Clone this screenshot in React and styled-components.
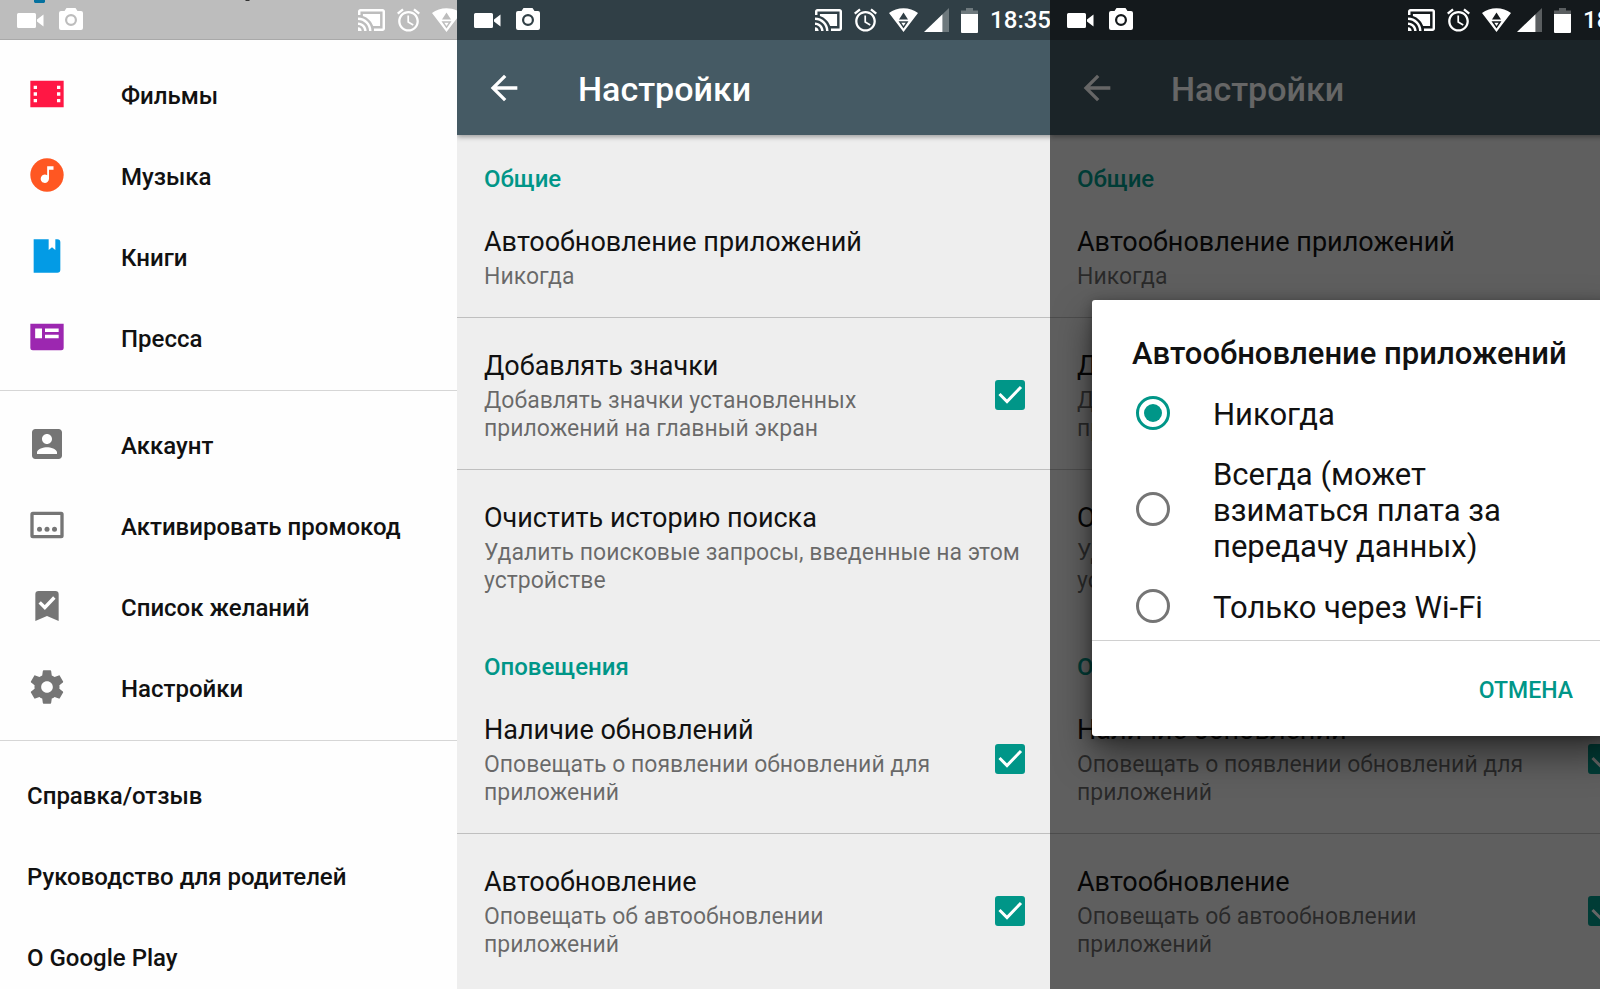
import React, { useState } from "react";
import styled, { createGlobalStyle, css } from "styled-components";

const teal = "#009688";

const GlobalStyle = createGlobalStyle`
  *, *::before, *::after { box-sizing: border-box; }
  body {
    margin: 0;
    font-family: Roboto, "Noto Sans", sans-serif;
    font-size: 24px;
    line-height: 28px;
    color: #111;
  }
  button, input { font: inherit; color: inherit; margin: 0; }
  h1, h2, h3, p { margin: 0; font: inherit; }
  svg { display: block; flex: none; }
`;

const Board = styled.main`
  display: grid;
  grid-template-columns: 457fr 593fr 550fr;
  height: 100vh;
  overflow: hidden;
`;

const Panel = styled.section`
  overflow: hidden;
  background: ${(p) => (p.$drawer ? "#fefefe" : "#eee")};
`;

const Screen = styled.div`
  position: relative;
  display: flex;
  flex-direction: column;
  min-width: 608px;
  min-height: 100%;
`;

const barLook = {
  drawer: css`background: #bdbdbd; box-shadow: inset 0 -1px #a9a9a9;`,
  normal: css`background: #303f46;`,
  dimmed: css`background: #14191c;`,
};

const StatusRow = styled.header`
  position: relative;
  z-index: 2;
  display: flex;
  justify-content: space-between;
  align-items: center;
  height: 40px;
  padding: 0 14px 0 17px;
  color: #fff;
  ${(p) => barLook[p.$look]}
`;

const StatusGroup = styled.div`
  display: flex;
  align-items: center;
  gap: ${(p) => p.$gap}px;
`;

const Clock = styled.time`
  font-weight: 500;
`;

const Behind = styled.svg`
  position: absolute;
  top: 0;
  left: 34px;
`;

const AppBar = styled.div`
  position: relative;
  display: flex;
  align-items: center;
  gap: 54px;
  height: 95px;
  padding: 0 27px;
  background: #455a64;
  color: #fff;
  box-shadow: 0 2px 5px rgba(0, 0, 0, 0.35);
`;

const BackButton = styled.button`
  display: flex;
  padding: 0;
  border: 0;
  background: none;
`;

const BarTitle = styled.h1`
  padding-top: 3px;
  font-size: 34px;
  line-height: 40px;
  font-weight: 500;
`;

const SectionTitle = styled.h2`
  padding: 30px 27px 1px;
  font-weight: 500;
  color: ${teal};
`;

const rowBox = css`
  display: flex;
  align-items: center;
  justify-content: space-between;
  gap: 36px;
  width: 100%;
  padding: 32px 27px ${(p) => (p.$last ? 28 : 26)}px;
  border: 0;
  border-bottom: ${(p) => (p.$last ? "0" : "1px solid #bfbfbf")};
  background: none;
  text-align: left;
`;

const ButtonRow = styled.button`${rowBox}`;
const LabelRow = styled.label`${rowBox}`;

const RowText = styled.span`
  display: flex;
  flex-direction: column;
  gap: 5px;
`;

const RowTitle = styled.span`
  font-size: 27px;
  line-height: 32px;
`;

const RowSummary = styled.span`
  font-size: 23px;
  color: rgba(0, 0, 0, 0.56);
`;

const CheckWrap = styled.span`
  display: grid;
  flex: none;
  margin: 0 13px 4px 0;

  & > * { grid-area: 1 / 1; }
  & > svg { pointer-events: none; }
`;

const CheckInput = styled.input`
  appearance: none;
  width: 30px;
  height: 30px;
  border: 3px solid #757575;
  border-radius: 3px;

  &:checked { border-color: ${teal}; background: ${teal}; }
`;

const DrawerGroup = styled.nav`
  display: flex;
  flex-direction: column;
  padding: 13px 0 12px;
  border-bottom: ${(p) => (p.$last ? "0" : "1px solid #d6d6d6")};
`;

const DrawerLink = styled.a`
  display: flex;
  align-items: center;
  gap: 54px;
  height: 81px;
  padding: 2px 27px 0;
  font-weight: 500;
  color: #111;
  text-decoration: none;

  & > svg { margin-bottom: 4px; }
`;

const DrawerTop = styled.div`
  height: 1px;
`;

const Scrim = styled.div`
  position: absolute;
  inset: 0;
  z-index: 1;
  padding: 300px 42px 0;
  background: rgba(0, 0, 0, 0.6);
`;

const Dialog = styled.div`
  border-radius: 3px;
  background: #fff;
  box-shadow: 0 18px 36px rgba(0, 0, 0, 0.5), 0 2px 12px rgba(0, 0, 0, 0.3);
`;

const DialogTitle = styled.h2`
  padding: 36px 40px 1px;
  font-size: 31px;
  line-height: 36px;
  font-weight: 500;
`;

const Choices = styled.div`
  height: 268px;
  overflow: hidden;
  border-bottom: 1px solid #d0d0d0;
`;

const Choice = styled.label`
  display: flex;
  align-items: center;
  gap: 43px;
  min-height: 81px;
  padding: 3px 54px 1px 44px;
  font-size: 31px;
  line-height: 36px;
`;

const RadioInput = styled.input`
  appearance: none;
  display: grid;
  place-items: center;
  flex: none;
  width: 34px;
  height: 34px;
  border: 3px solid #757575;
  border-radius: 50%;

  ${Choice} & { margin-bottom: 4px; }

  &:checked { border-color: ${teal}; }
  &:checked::before {
    content: "";
    width: 18px;
    height: 18px;
    border-radius: 50%;
    background: ${teal};
  }
`;

const DialogActions = styled.div`
  display: flex;
  justify-content: flex-end;
  padding: 25px 27px 20px;
`;

const TextButton = styled.button`
  height: 50px;
  padding: 0 16px;
  border: 0;
  background: none;
  font-size: 23px;
  font-weight: 500;
  color: ${teal};
`;

const Icon = ({ children, color = "#757575" }) => (
  <svg width="40" height="40" viewBox="0 0 24 24" fill={color} aria-hidden="true">{children}</svg>
);

const icons = {
  movies: (
    <Icon color="#ff1744">
      <path fillRule="evenodd" d="M2 4h20v16H2zM4 7v2h2V7zM4 11v2h2v-2zM4 15v2h2v-2zM18 7v2h2V7zM18 11v2h2v-2zM18 15v2h2v-2z" />
    </Icon>
  ),
  music: (
    <Icon color="#ff5722">
      <circle cx="12" cy="12" r="10" />
      <path fill="#fff" d="M12.1 6.8h3.8v2.1h-2.7v5.4a2.5 2.5 0 1 1-1.1-2.1z" />
    </Icon>
  ),
  books: (
    <Icon color="#039be5">
      <path d="M4 2h9v6.4l2-1.7 2 1.7V2h1.2A1.8 1.8 0 0 1 20 3.8V20.2A1.8 1.8 0 0 1 18.2 22H4z" />
    </Icon>
  ),
  press: (
    <Icon color="#9c27b0">
      <path d="M2 4h20v14.5A1.5 1.5 0 0 1 20.5 20h-17A1.5 1.5 0 0 1 2 18.5z" />
      <path fill="#fff" d="M4.9 6.9h4.1v5.9H4.9zM10.8 6.9H19v2.1h-8.2zM10.8 10.7H19v2.1h-8.2z" />
    </Icon>
  ),
  account: (
    <Icon>
      <path d="M3 5v14c0 1.1.89 2 2 2h14c1.1 0 2-.9 2-2V5c0-1.1-.9-2-2-2H5c-1.11 0-2 .9-2 2zm12 4c0 1.66-1.34 3-3 3s-3-1.34-3-3 1.34-3 3-3 3 1.34 3 3zm-9 8c0-2 4-3.1 6-3.1s6 1.1 6 3.1v1H6v-1z" />
    </Icon>
  ),
  promo: (
    <Icon>
      <path fillRule="evenodd" d="M3.5 4h17A1.5 1.5 0 0 1 22 5.5v13a1.5 1.5 0 0 1-1.5 1.5h-17A1.5 1.5 0 0 1 2 18.5v-13A1.5 1.5 0 0 1 3.5 4zM4 6v12h16V6z" />
      <circle cx="7.5" cy="14.5" r="1.5" />
      <circle cx="12" cy="14.5" r="1.5" />
      <circle cx="16.5" cy="14.5" r="1.5" />
    </Icon>
  ),
  wishlist: (
    <Icon>
      <path d="M7 3h10a2 2 0 0 1 2 2v16l-7-3-7 3V5a2 2 0 0 1 2-2z" />
      <path d="M7.6 9.8l3.1 3.1 5.7-6" fill="none" stroke="#fff" strokeWidth="2" />
    </Icon>
  ),
  settings: (
    <Icon>
      <path d="M19.43 12.98c.04-.32.07-.64.07-.98s-.03-.66-.07-.98l2.11-1.65c.19-.15.24-.42.12-.64l-2-3.46c-.12-.22-.39-.3-.61-.22l-2.49 1c-.52-.4-1.08-.73-1.69-.98l-.38-2.65C14.46 2.18 14.25 2 14 2h-4c-.25 0-.46.18-.49.42l-.38 2.65c-.61.25-1.17.59-1.69.98l-2.49-1c-.23-.09-.49 0-.61.22l-2 3.46c-.13.22-.07.49.12.64l2.11 1.65c-.04.32-.07.65-.07.98s.03.66.07.98l-2.11 1.65c-.19.15-.24.42-.12.64l2 3.46c.12.22.39.3.61.22l2.49-1c.52.4 1.08.73 1.69.98l.38 2.65c.03.24.24.42.49.42h4c.25 0 .46-.18.49-.42l.38-2.65c.61-.25 1.17-.59 1.69-.98l2.49 1c.23.09.49 0 .61-.22l2-3.46c.12-.22.07-.49-.12-.64l-2.11-1.65zM12 15.5c-1.93 0-3.5-1.57-3.5-3.5s1.57-3.5 3.5-3.5 3.5 1.57 3.5 3.5-1.57 3.5-3.5 3.5z" />
    </Icon>
  ),
};

const StatusBar = ({ look, children }) => (
  <StatusRow $look={look}>
    {children}
    <StatusGroup $gap={15}>
      <svg width="27" height="15" viewBox="0 0 27 15" fill="currentColor" aria-hidden="true">
        <path d="M1.5 0h16a1.5 1.5 0 0 1 1.5 1.5v12a1.5 1.5 0 0 1-1.5 1.5h-16A1.5 1.5 0 0 1 0 13.5v-12A1.5 1.5 0 0 1 1.5 0zM20 6.5L26.5 1.5v12L20 8.5z" />
      </svg>
      <svg width="24" height="24" viewBox="0 0 24 24" fill="currentColor" aria-hidden="true">
        <path fillRule="evenodd" d="M7.5 0h9l2 3H22a2 2 0 0 1 2 2v15a2 2 0 0 1-2 2H2a2 2 0 0 1-2-2V5a2 2 0 0 1 2-2h3.5zM12 6a6 6 0 1 0 0 12 6 6 0 0 0 0-12z" />
        <circle cx="12" cy="12" r="3.8" />
      </svg>
    </StatusGroup>
    <StatusGroup $gap={12}>
      <svg width="27" height="22" viewBox="1 3 22 18" preserveAspectRatio="none" fill="currentColor" aria-hidden="true">
        <path d="M1 18v3h3c0-1.66-1.34-3-3-3zm0-4v2c2.76 0 5 2.24 5 5h2c0-3.87-3.13-7-7-7zm18-7H5v1.63c3.96 1.28 7.09 4.41 8.37 8.37H19V7zM1 10v2c4.97 0 9 4.03 9 9h2c0-6.08-4.93-11-11-11zm20-7H3c-1.1 0-2 .9-2 2v3h2V5h18v14h-7v2h7c1.1 0 2-.9 2-2V5c0-1.1-.9-2-2-2z" />
      </svg>
      <svg width="23" height="24" viewBox="2 1.86 20 20.14" fill="currentColor" aria-hidden="true">
        <path d="M22 5.72l-4.6-3.86-1.29 1.53 4.6 3.86L22 5.72zM7.88 3.39L6.6 1.86 2 5.71l1.29 1.53 4.59-3.85zM12.5 8H11v6l4.75 2.85.75-1.23-4-2.37V8zM12 4c-4.97 0-9 4.03-9 9s4.02 9 9 9c4.97 0 9-4.03 9-9s-4.03-9-9-9zm0 16c-3.87 0-7-3.13-7-7s3.13-7 7-7 7 3.13 7 7-3.13 7-7 7z" />
      </svg>
      <StatusGroup $gap={6}>
        <svg width="29" height="24" viewBox="0 0 29 24" fill="currentColor" aria-hidden="true">
          <path fillRule="evenodd" d="M0 5C8-1.5 21-1.5 29 5L14.5 24zM14.5 4.5L10 11.5h9zM9.5 13.2L14.5 20.5l5-7.3zM12.3 14.7h4.4L14.5 17.9z" />
        </svg>
        <svg width="25" height="24" viewBox="0 0 25 24" fill="currentColor" aria-hidden="true">
          <path opacity="0.3" d="M18.5 6.2L25 0v24h-6.5z" />
          <path d="M18.5 6.2V24H0z" />
        </svg>
      </StatusGroup>
      <svg width="17" height="25" viewBox="0 0 17 25" fill="currentColor" aria-hidden="true">
        <path opacity="0.3" d="M5 0h7v2.5h5V6H0V2.5h5z" />
        <path d="M0 6h17v18a1 1 0 0 1-1 1H1a1 1 0 0 1-1-1z" />
      </svg>
      <Clock>18:35</Clock>
    </StatusGroup>
  </StatusRow>
);

const CheckRow = ({ title, summary, last }) => {
  const [on, setOn] = useState(true);
  return (
    <LabelRow $last={last}>
      <RowText>
        <RowTitle>{title}</RowTitle>
        <RowSummary>{summary}</RowSummary>
      </RowText>
      <CheckWrap>
        <CheckInput type="checkbox" checked={on} onChange={() => setOn(!on)} />
        {on && (
          <svg width="30" height="30" viewBox="0 0 30 30" fill="none" stroke="#fff" strokeWidth="3" aria-hidden="true">
            <path d="M4.5 14l7.5 7.5L26 7" />
          </svg>
        )}
      </CheckWrap>
    </LabelRow>
  );
};

const TapRow = ({ title, summary, last }) => (
  <ButtonRow type="button" $last={last}>
    <RowText>
      <RowTitle>{title}</RowTitle>
      <RowSummary>{summary}</RowSummary>
    </RowText>
  </ButtonRow>
);

const SettingsScreen = ({ look, children }) => (
  <Screen>
    <StatusBar look={look} />
    <AppBar>
      <BackButton type="button" aria-label="Назад">
        <svg width="40" height="40" viewBox="0 0 24 24" fill="currentColor" aria-hidden="true">
          <path d="M20 11H7.83l5.59-5.59L12 4l-8 8 8 8 1.41-1.41L7.83 13H20v-2z" />
        </svg>
      </BackButton>
      <BarTitle>Настройки</BarTitle>
    </AppBar>
    <SectionTitle>Общие</SectionTitle>
    <TapRow title="Автообновление приложений" summary="Никогда" />
    <CheckRow title="Добавлять значки" summary="Добавлять значки установленных приложений на главный экран" />
    <TapRow title="Очистить историю поиска" summary="Удалить поисковые запросы, введенные на этом устройстве" last />
    <SectionTitle>Оповещения</SectionTitle>
    <CheckRow title="Наличие обновлений" summary="Оповещать о появлении обновлений для приложений" />
    <CheckRow title="Автообновление" summary="Оповещать об автообновлении приложений" last />
    {children}
  </Screen>
);

const drawerGroups = [
  [["Фильмы", "movies"], ["Музыка", "music"], ["Книги", "books"], ["Пресса", "press"]],
  [["Аккаунт", "account"], ["Активировать промокод", "promo"], ["Список желаний", "wishlist"], ["Настройки", "settings"]],
  [["Справка/отзыв"], ["Руководство для родителей"], ["О Google Play"]],
];

const choices = ["Никогда", "Всегда (может взиматься плата за передачу данных)", "Только через Wi-Fi"];

export default function App() {
  const [picked, setPicked] = useState(0);
  return (
    <>
      <GlobalStyle />
      <Board>
        <Panel $drawer>
          <Screen>
            <StatusBar look="drawer">
              <Behind width="220" height="3" viewBox="0 0 220 3" aria-hidden="true">
                <path fill="#04719f" d="M0 0h11v2l-1 1H1L0 2z" />
                <path fill="#333" d="M211 0h5l-1 1h-3z" />
              </Behind>
            </StatusBar>
            <DrawerTop />
            {drawerGroups.map((group, i) => (
              <DrawerGroup key={i} $last={i === drawerGroups.length - 1}>
                {group.map(([label, icon]) => (
                  <DrawerLink key={label} href="#">
                    {icon && icons[icon]}
                    {label}
                  </DrawerLink>
                ))}
              </DrawerGroup>
            ))}
          </Screen>
        </Panel>
        <Panel>
          <SettingsScreen look="normal" />
        </Panel>
        <Panel>
          <SettingsScreen look="dimmed">
            <Scrim>
              <Dialog role="dialog" aria-labelledby="dialog-title">
                <DialogTitle id="dialog-title">Автообновление приложений</DialogTitle>
                <Choices>
                  {choices.map((text, i) => (
                    <Choice key={text}>
                      <RadioInput type="radio" name="auto-update" checked={picked === i} onChange={() => setPicked(i)} />
                      <span>{text}</span>
                    </Choice>
                  ))}
                </Choices>
                <DialogActions>
                  <TextButton type="button">ОТМЕНА</TextButton>
                </DialogActions>
              </Dialog>
            </Scrim>
          </SettingsScreen>
        </Panel>
      </Board>
    </>
  );
}
